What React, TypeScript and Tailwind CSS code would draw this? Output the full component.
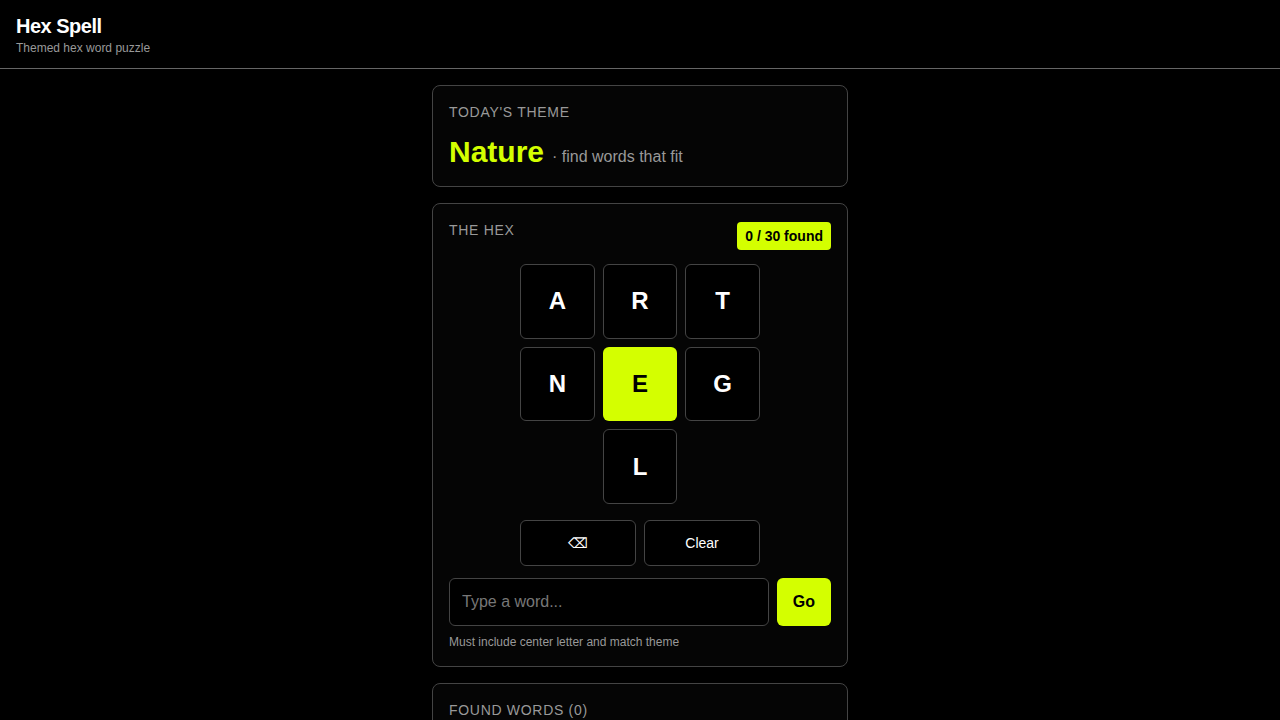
import React from 'react';

const LETTERS: (string | null)[] = ['A', 'R', 'T', 'N', 'E', 'G', null, 'L', null];

const App: React.FC = () => {
  return (
    <div className="min-h-screen bg-black text-white font-['Liberation_Sans',Arial,sans-serif]">
      {/* Header */}
      <header className="px-4 py-3 border-b border-[#666]">
        <h1 className="text-xl font-bold leading-7 tracking-tight">Hex Spell</h1>
        <p className="text-xs text-[#999]">Themed hex word puzzle</p>
      </header>

      <main className="w-[416px] mx-auto pt-4 flex flex-col gap-4">
        {/* Theme */}
        <section className="border border-[#444] rounded-lg bg-[#050505] p-4">
          <div className="text-sm uppercase tracking-wider text-[#999]">Today's Theme</div>
          <div className="mt-3 flex items-baseline gap-2">
            <span className="text-3xl font-bold text-[#d4ff00]">Nature</span>
            <span className="text-base text-[#999]">· find words that fit</span>
          </div>
        </section>

        {/* The hex */}
        <section className="border border-[#444] rounded-lg bg-[#050505] p-4">
          <div className="flex justify-between items-start h-[30px]">
            <div className="text-sm uppercase tracking-wider text-[#999]">The Hex</div>
            <span className="mt-0.5 bg-[#d4ff00] text-black text-sm font-bold px-2 py-1 rounded">0 / 30 found</span>
          </div>

          <div className="mt-[14px] w-[240px] mx-auto grid grid-cols-3 gap-2">
            {LETTERS.map((l, i) =>
              l ? (
                <button
                  key={i}
                  className={
                    l === 'E'
                      ? 'aspect-square rounded-md bg-[#d4ff00] text-black text-2xl font-bold'
                      : 'aspect-square rounded-md border border-[#444] bg-black text-white text-2xl font-bold'
                  }
                >
                  {l}
                </button>
              ) : (
                <div key={i} />
              )
            )}
          </div>

          <div className="mt-4 w-[240px] mx-auto grid grid-cols-2 gap-2">
            <button className="h-[46px] rounded-md border border-[#444] bg-black text-sm">⌫</button>
            <button className="h-[46px] rounded-md border border-[#444] bg-black text-sm">Clear</button>
          </div>

          <div className="mt-3 flex gap-2">
            <input
              className="flex-1 h-12 rounded-md border border-[#444] bg-black px-3 text-base text-white placeholder:text-[#777] outline-none"
              placeholder="Type a word..."
            />
            <button className="h-12 px-4 rounded-md bg-[#d4ff00] text-black text-base font-bold">Go</button>
          </div>
          <p className="mt-2 text-xs text-[#999]">Must include center letter and match theme</p>
        </section>

        {/* Found words */}
        <section className="border border-[#444] rounded-lg bg-[#050505] p-4">
          <div className="text-sm uppercase tracking-wider text-[#999]">Found Words (0)</div>
          <p className="mt-3 text-sm text-[#777]">No words yet.</p>
        </section>
      </main>
    </div>
  );
};

export default App;
